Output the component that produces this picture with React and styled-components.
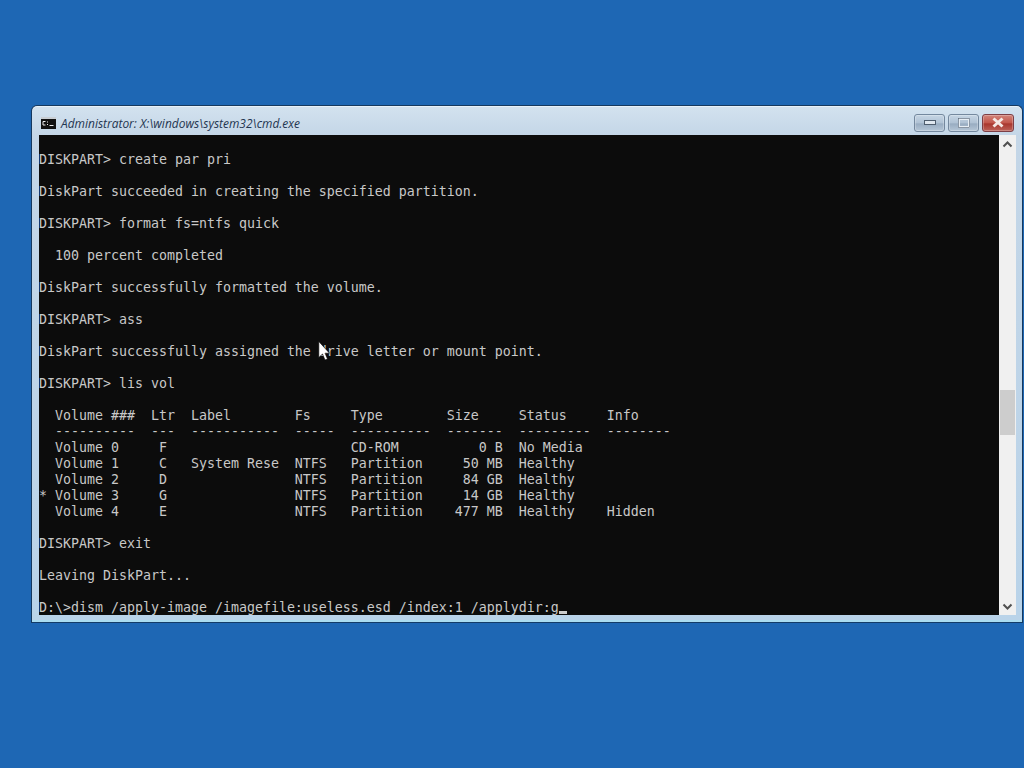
import React from 'react';
import styled, { createGlobalStyle } from 'styled-components';

const GlobalStyle = createGlobalStyle`
  html, body {
    margin: 0;
    padding: 0;
    height: 100%;
    overflow: hidden;
    background: #1e67b4;
  }
`;

const Desktop = styled.div`
  width: 1024px;
  height: 768px;
  padding: 105px 0 0 31px;
  box-sizing: border-box;
  background: #1e67b4;
  overflow: hidden;
  position: relative;
`;

const Window = styled.div`
  width: 992px;
  height: 518px;
  box-sizing: border-box;
  display: flex;
  flex-direction: column;
  border: 1px solid #16395f;
  border-bottom-color: #123c68;
  border-radius: 6px 6px 0 0;
  padding: 0 6px 6px 7px;
  background: linear-gradient(to bottom, #d3e2ef 0, #c4d6e7 30px, #b9d3e9 100%);
  box-shadow: inset 0 1px 0 #e9f1f8, inset 0 -2px 0 #a9dcf0;
`;

const TitleBar = styled.div`
  height: 29px;
  flex: none;
  display: flex;
  align-items: center;
  gap: 5px;
  padding: 4px 2px 0 2px;
  box-sizing: border-box;
`;

const Title = styled.span`
  font-family: 'Open Sans', 'Liberation Sans', sans-serif;
  font-style: italic;
  font-size: 11.95px;
  color: #1f3550;
  white-space: nowrap;
  flex: 1;
  margin-top: 2px;
`;

const Controls = styled.div`
  display: flex;
  gap: 3px;
`;

const CtrlButton = styled.div`
  width: ${p => (p.$close ? 32 : 31)}px;
  height: 18px;
  box-sizing: border-box;
  display: flex;
  align-items: center;
  justify-content: center;
  border: 1px solid ${p => (p.$close ? '#7d3f46' : '#74889e')};
  border-radius: 3px;
  background: ${p => p.$close
    ? 'linear-gradient(to bottom, #d2847a 0, #c2564b 50%, #a8362d 55%, #bd6259 100%)'
    : 'linear-gradient(to bottom, #c6d5e4 0, #afc1d4 50%, #98acc1 55%, #b5c6d7 100%)'};
  box-shadow: inset 0 0 0 1px rgba(255, 255, 255, 0.25);
`;

const Body = styled.div`
  flex: 1;
  min-height: 0;
  display: flex;
`;

const Console = styled.div`
  width: 960px;
  height: 480px;
  overflow: hidden;
  background: #0c0c0c;
  position: relative;
`;

const Output = styled.pre`
  margin: 0;
  padding-top: 1px;
  font-family: 'DejaVu Sans Mono', 'Liberation Mono', monospace;
  font-size: 13.29px;
  line-height: 16px;
  color: #c8c8c8;
`;

const Caret = styled.span`
  display: inline-block;
  width: 8px;
  height: 3px;
  background: #cccccc;
  vertical-align: baseline;
  position: relative;
  top: 2px;
`;

const Scrollbar = styled.div`
  width: 17px;
  height: 480px;
  flex: none;
  display: flex;
  flex-direction: column;
  background: #f0f0f0;
`;

const ScrollArrow = styled.div`
  height: 17px;
  flex: none;
  display: flex;
  align-items: center;
  justify-content: center;
`;

const ScrollTrack = styled.div`
  flex: 1;
  padding-top: ${p => p.$offset}px;
`;

const ScrollThumb = styled.div`
  height: 45px;
  margin: 0 1px;
  background: #cdcdcd;
`;

const Pointer = styled.svg`
  position: absolute;
  left: 318px;
  top: 341px;
`;

const LINES = `
DISKPART> create par pri

DiskPart succeeded in creating the specified partition.

DISKPART> format fs=ntfs quick

  100 percent completed

DiskPart successfully formatted the volume.

DISKPART> ass

DiskPart successfully assigned the drive letter or mount point.

DISKPART> lis vol

  Volume ###  Ltr  Label        Fs     Type        Size     Status     Info
  ----------  ---  -----------  -----  ----------  -------  ---------  --------
  Volume 0     F                       CD-ROM          0 B  No Media
  Volume 1     C   System Rese  NTFS   Partition     50 MB  Healthy
  Volume 2     D                NTFS   Partition     84 GB  Healthy
* Volume 3     G                NTFS   Partition     14 GB  Healthy
  Volume 4     E                NTFS   Partition    477 MB  Healthy    Hidden

DISKPART> exit

Leaving DiskPart...

D:\\>dism /apply-image /imagefile:useless.esd /index:1 /applydir:g`;

const CmdIcon = () => (
  <svg width="15" height="12" viewBox="0 0 15 12">
    <rect width="15" height="12" fill="#111" />
    <rect width="15" height="2" fill="#c9ced3" />
    <path d="M2 4.5h2.5M2 4.5v3.5M2 8h2.5M6 5h1M6 7.5h1M8.5 8.5h4" stroke="#eee" strokeWidth="1" fill="none" />
  </svg>
);

const Chevron = ({ down }) => (
  <svg width="11" height="8" viewBox="0 0 11 8">
    <path d={down ? 'M1.5 1.5 5.5 5.5 9.5 1.5' : 'M1.5 6.5 5.5 2.5 9.5 6.5'} stroke="#505050" strokeWidth="2" fill="none" />
  </svg>
);

export default function App() {
  return (
    <Desktop>
      <GlobalStyle />
      <Window>
        <TitleBar>
          <CmdIcon />
          <Title>Administrator: X:\windows\system32\cmd.exe</Title>
          <Controls>
            <CtrlButton>
              <svg width="12" height="5" viewBox="0 0 12 5"><rect x="0.5" y="0.5" width="11" height="4" fill="#dfe7ef" stroke="#4e5d6e" /></svg>
            </CtrlButton>
            <CtrlButton>
              <svg width="12" height="10" viewBox="0 0 12 10"><rect x="1" y="1" width="10" height="8" fill="none" stroke="#e6edf4" strokeWidth="2" /><rect x="0.5" y="0.5" width="11" height="9" fill="none" stroke="#4e5d6e" strokeWidth="0.6" /></svg>
            </CtrlButton>
            <CtrlButton $close>
              <svg width="14" height="11" viewBox="0 0 14 11"><path d="M2.5 1.5 11.5 9.5M11.5 1.5 2.5 9.5" stroke="#f4e8e4" strokeWidth="3" /></svg>
            </CtrlButton>
          </Controls>
        </TitleBar>
        <Body>
          <Console>
            <Output>{LINES}<Caret /></Output>
          </Console>
          <Scrollbar>
            <ScrollArrow><Chevron /></ScrollArrow>
            <ScrollTrack $offset={238}><ScrollThumb /></ScrollTrack>
            <ScrollArrow><Chevron down /></ScrollArrow>
          </Scrollbar>
        </Body>
      </Window>
      <Pointer width="12" height="20" viewBox="0 0 12 20">
        <path d="M0.8 0.5V16.5L4.5 13 7 19 9.5 18 7 12.2H11.5Z" fill="#fff" stroke="#000" strokeWidth="0.6" />
      </Pointer>
    </Desktop>
  );
}
